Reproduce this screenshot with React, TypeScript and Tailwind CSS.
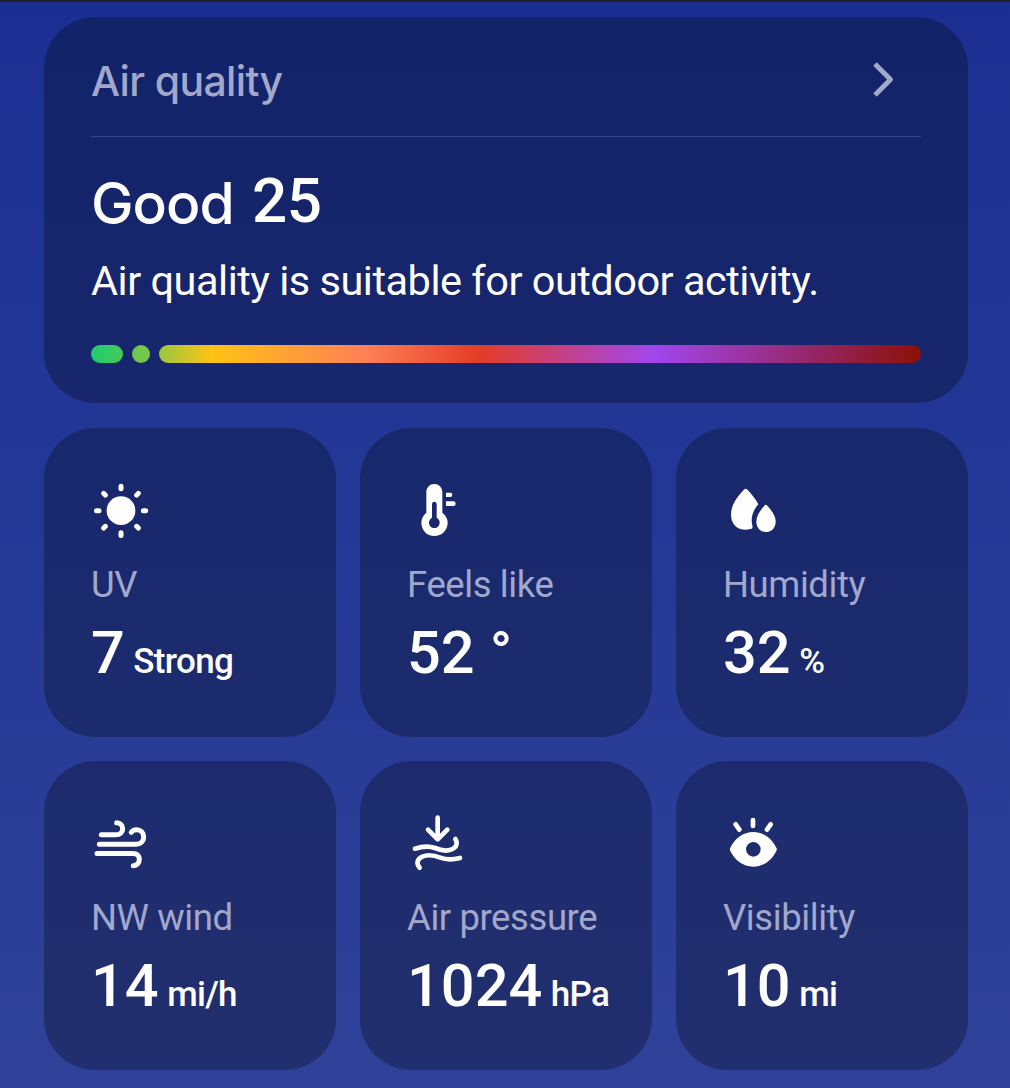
import type { ReactNode } from "react";

const SunIcon = () => (
  <svg width="90" height="80" viewBox="0 0 270 240" className="-mt-px block">
    <circle cx="123" cy="122" r="43" fill="#fff" />
    <g stroke="#fff" strokeWidth="15" strokeLinecap="round">
      <path d="M123 48.500V56M123 188V196.500M49.500 122H57M190 122H197M71 70L76 75.500M175 70L170 75.500M71 174L76 169M175 174L170 169" />
    </g>
  </svg>
);

const ThermometerIcon = () => (
  <svg width="90" height="80" viewBox="0 0 270 240" className="-mt-px ml-[4px] block">
    <path
      fill="#fff"
      fillRule="evenodd"
      d="M79 66C79 52 90 42 103 42S127 52 127 66V128C137 135 143 146 143 158C143 181 125 198 103 198S64 181 64 158C64 146 70 135 79 128ZM96 103V143C90 146 87 152 87 158C87 167 94 174 103 174S119 167 119 158C119 152 116 146 110 143V103C110 98 107 95 103 95S96 98 96 103Z"
    />
    <path fill="#fff" d="M138 68H151Q157 68 157 74.500T151 81H138ZM138 94H160Q167 94 167 101T160 108H138Z" />
  </svg>
);

const DropsIcon = () => (
  <svg width="90" height="80" viewBox="0 0 270 240" className="-mt-px -ml-[2px] block">
    <path
      fill="#fff"
      d="M103 58Q107 54 111 58C123 71 136 86 145 103C132 118 125 134 125 151C125 161 129 169 127 175C122 178 114 179 107 179C81 179 63 161 63 134C63 104 83 79 103 58Z"
    />
    <path fill="#fff" d="M163 107Q167.500 102 172 107C184 121 197 137 197 155C197 173 184 186 168 186S139 173 139 155C139 137 151 121 163 107Z" />
  </svg>
);

const WindIcon = () => (
  <svg width="90" height="80" viewBox="0 0 270 240" className="mt-px block">
    <path
      fill="none"
      stroke="#fff"
      strokeWidth="15"
      strokeLinecap="round"
      strokeLinejoin="round"
      d="M64 89.500H107C120 89.500 128 82 128 71C128 61 121 54 110 53.500M58 118H168C182 118 191 109 191 96C191 83 182 74 170 74C162 74 157 77 154 82M51 145.500H159C171 145.500 178 153 178 163C178 174 171 182 160 182"
    />
  </svg>
);

const PressureIcon = () => (
  <svg width="90" height="80" viewBox="0 0 270 240" className="mt-px ml-[4px] block">
    <path
      fill="none"
      stroke="#fff"
      strokeWidth="14"
      strokeLinecap="round"
      strokeLinejoin="round"
      d="M113 38V99M84 74L113 103L142 74M45 131C66 124 86 122 105 129C124 137 138 140 153 134C168 128 175 117 166 102M180 159C160 164 142 166 121 158C101 150 82 148 67 155C51 162 48 176 59 188"
    />
  </svg>
);

const EyeIcon = () => (
  <svg width="90" height="80" viewBox="0 0 270 240" className="mt-px -ml-[2px] block">
    <path
      fill="#fff"
      fillRule="evenodd"
      d="M61 128C74 101 99 81 130 81S186 101 199 128Q202 133 199 138C186 165 161 185 130 185S74 165 61 138Q58 133 61 128ZM130 111A22 22 0 1 0 130 155A22 22 0 1 0 130 111Z"
    />
    <path stroke="#fff" strokeWidth="14" strokeLinecap="round" d="M129 45V63M77 58L88 74M182 58L171 74" />
  </svg>
);

type Metric = { icon: ReactNode; label: string; value: string; unit: string };

const metrics: Metric[] = [
  { icon: <SunIcon />, label: "UV", value: "7", unit: "Strong" },
  { icon: <ThermometerIcon />, label: "Feels like", value: "52", unit: "°" },
  { icon: <DropsIcon />, label: "Humidity", value: "32", unit: "%" },
  { icon: <WindIcon />, label: "NW wind", value: "14", unit: "mi/h" },
  { icon: <PressureIcon />, label: "Air pressure", value: "1024", unit: "hPa" },
  { icon: <EyeIcon />, label: "Visibility", value: "10", unit: "mi" },
];

function MetricCard({ icon, label, value, unit }: Metric) {
  return (
    <section className="h-[309px] rounded-[51px] bg-black/27 pt-[43px] pl-[47px]">
      <div className="-ml-[11px] flex h-[80px] items-start">{icon}</div>
      <div className="mt-[8px] h-[52px] text-[36.500px] leading-[52px] tracking-[-0.420px] whitespace-nowrap text-[#a1a8cb]">{label}</div>
      <div className="mt-[8px] flex h-[68px] items-baseline whitespace-nowrap font-medium leading-[68px] text-white">
        <span className="text-[59.500px]">{value}</span>
        {unit === "°" ? (
          <span className="ml-[15px] text-[59px]">{unit}</span>
        ) : (
          <span className="ml-[8.500px] text-[35px] tracking-[-0.700px]">{unit}</span>
        )}
      </div>
    </section>
  );
}

export default function App() {
  return (
    <main className="h-[1088px] w-[1010px] overflow-hidden border-t-2 border-[#202124] bg-linear-to-b from-[#1a2f91] via-[#243996] to-[#2f4198] px-[44px] pt-[15px] pr-[42px] font-['Roboto',sans-serif]">
      <section className="h-[386px] rounded-[51px] bg-black/27 px-[47px] pt-[40px]">
        <header className="flex h-[80px] items-start justify-between border-b border-[#344582]">
          <h1 className="font-['Inter',sans-serif] text-[41px] leading-[48px] font-medium tracking-[-0.650px] text-[#a1a8cb]">Air quality</h1>
          <svg width="24" height="38" viewBox="0 0 24 38" className="mt-[3px] mr-[25px]">
            <path d="M3 4L18.500 19.500L3 35" fill="none" stroke="#a1a8cb" strokeWidth="5" strokeLinejoin="round" />
          </svg>
        </header>
        <div className="mt-[28px] flex h-[73px] items-start text-white">
          <span className="mt-[3px] w-[142px] font-['Inter',sans-serif] text-[57px] leading-[72px] font-medium tracking-[-1px] whitespace-nowrap">Good</span>
          <span className="ml-[19px] text-[62px] font-medium leading-[72px] tracking-[-0.500px]">25</span>
        </div>
        <p className="mt-[18px] h-[50px] text-[41.500px] leading-[50px] tracking-[-0.500px] whitespace-nowrap text-white">
          Air quality is suitable for outdoor activity.
        </p>
        <div className="mt-[39px] flex h-[18px]">
          <div className="w-[32px] rounded-full bg-linear-to-r from-[#16ce6c] to-[#44c95a]" />
          <div className="ml-[9px] w-[18px] rounded-full bg-linear-to-r from-[#68c651] to-[#7dc74a]" />
          <div className="ml-[9px] flex-1 rounded-full bg-[linear-gradient(90deg,#99c740_0%,#ffc313_7%,#ff8056_27%,#e43d25_42%,#a146ef_65%,#8d120e_99%)]" />
        </div>
      </section>
      <div className="mt-[25px] grid grid-cols-3 gap-[24px]">
        {metrics.map((metric) => (
          <MetricCard key={metric.label} {...metric} />
        ))}
      </div>
    </main>
  );
}
